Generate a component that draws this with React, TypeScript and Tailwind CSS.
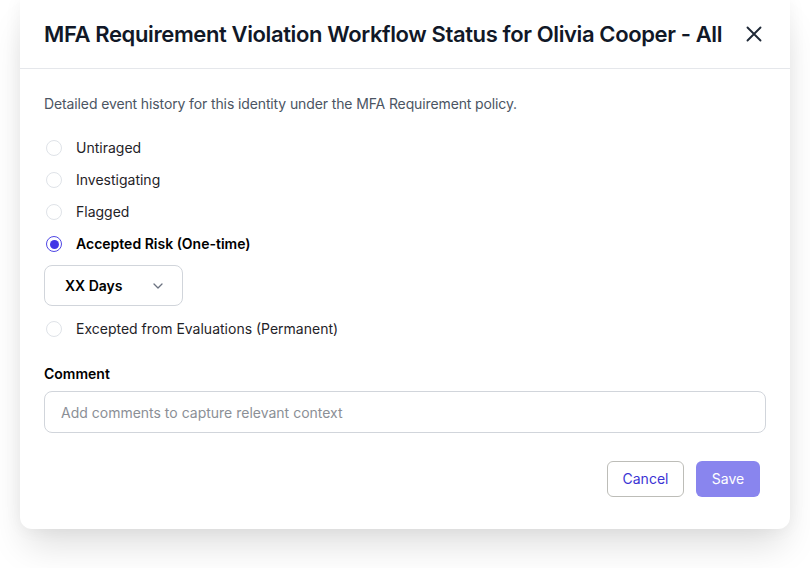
import React, { useState } from 'react';

const statuses = [
  'Untiraged',
  'Investigating',
  'Flagged',
  'Accepted Risk (One-time)',
];

const Radio: React.FC<{ checked: boolean }> = ({ checked }) => (
  <span
    className={`flex h-4 w-4 shrink-0 items-center justify-center rounded-full border ${
      checked ? 'border-[#4f46e5] border-[1.5px]' : 'border-[#dfe3e8] bg-white'
    }`}
  >
    {checked && <span className="h-[9px] w-[9px] rounded-full bg-[#4338e6]" />}
  </span>
);

const RadioRow: React.FC<{
  label: string;
  checked: boolean;
  onClick: () => void;
  className?: string;
}> = ({ label, checked, onClick, className = '' }) => (
  <button onClick={onClick} className={`flex h-8 items-center gap-[14px] pl-[2px] text-left ${className}`}>
    <Radio checked={checked} />
    <span className={`text-sm ${checked ? 'font-semibold text-black' : 'text-[#1f2328]'}`}>{label}</span>
  </button>
);

export default function App() {
  const [status, setStatus] = useState('Accepted Risk (One-time)');
  const [comment, setComment] = useState('');

  return (
    <div className="min-h-[568px] bg-white px-5" style={{ fontFamily: 'Inter, "Noto Sans", sans-serif' }}>
      <div className="w-[770px] rounded-b-xl bg-white shadow-[0_22px_36px_-6px_rgba(0,0,0,0.13),0_0_18px_rgba(0,0,0,0.05)]">
        <div className="flex h-[69px] items-center justify-between border-b border-[#e5e7eb] pl-6 pr-7">
          <h2 className="text-[22px] font-semibold tracking-[-0.38px] text-[#111827]">
            MFA Requirement Violation Workflow Status for Olivia Cooper - All
          </h2>
          <button className="text-[#1f2937]">
            <svg width="16" height="16" viewBox="0 0 16 16" fill="none" stroke="currentColor" strokeWidth="1.9" strokeLinecap="round">
              <path d="M1.5 1.5l13 13M14.5 1.5l-13 13" />
            </svg>
          </button>
        </div>

        <div className="px-6 pb-[32px] pt-[25px]">
          <p className="text-sm leading-5 tracking-[-0.12px] text-[#4b5563]">
            Detailed event history for this identity under the MFA Requirement policy.
          </p>

          <div className="mt-[18px] flex flex-col">
            {statuses.map((s) => (
              <RadioRow key={s} label={s} checked={status === s} onClick={() => setStatus(s)} />
            ))}
          </div>

          <button className="mt-[5px] flex h-[41px] w-[139px] items-center justify-between rounded-lg border border-[#d1d5db] pl-5 pr-[19px]">
            <span className="text-sm font-semibold text-black">XX Days</span>
            <svg width="10" height="6" viewBox="0 0 10 6" fill="none" stroke="#6b7280" strokeWidth="1.3" strokeLinecap="round" strokeLinejoin="round">
              <path d="M1 1l4 4 4-4" />
            </svg>
          </button>

          <RadioRow
            className="mt-[7px]"
            label="Excepted from Evaluations (Permanent)"
            checked={status === 'Excepted'}
            onClick={() => setStatus('Excepted')}
          />

          <label className="mt-[19px] block text-sm font-semibold leading-5 text-black">Comment</label>
          <input
            value={comment}
            onChange={(e) => setComment(e.target.value)}
            placeholder="Add comments to capture relevant context"
            className="mt-[7px] h-[42px] w-full rounded-lg border border-[#d1d5db] px-4 text-sm text-gray-900 outline-none placeholder:text-[#8b8f96]"
          />

          <div className="mt-[28px] flex justify-end gap-3 pr-[6px]">
            <button className="h-9 w-[77px] rounded-md border border-[#bdbdb8] text-sm text-[#3b34d4]">Cancel</button>
            <button className="h-9 w-16 rounded-md bg-[#8985ee] text-sm text-white">Save</button>
          </div>
        </div>
      </div>
    </div>
  );
}
